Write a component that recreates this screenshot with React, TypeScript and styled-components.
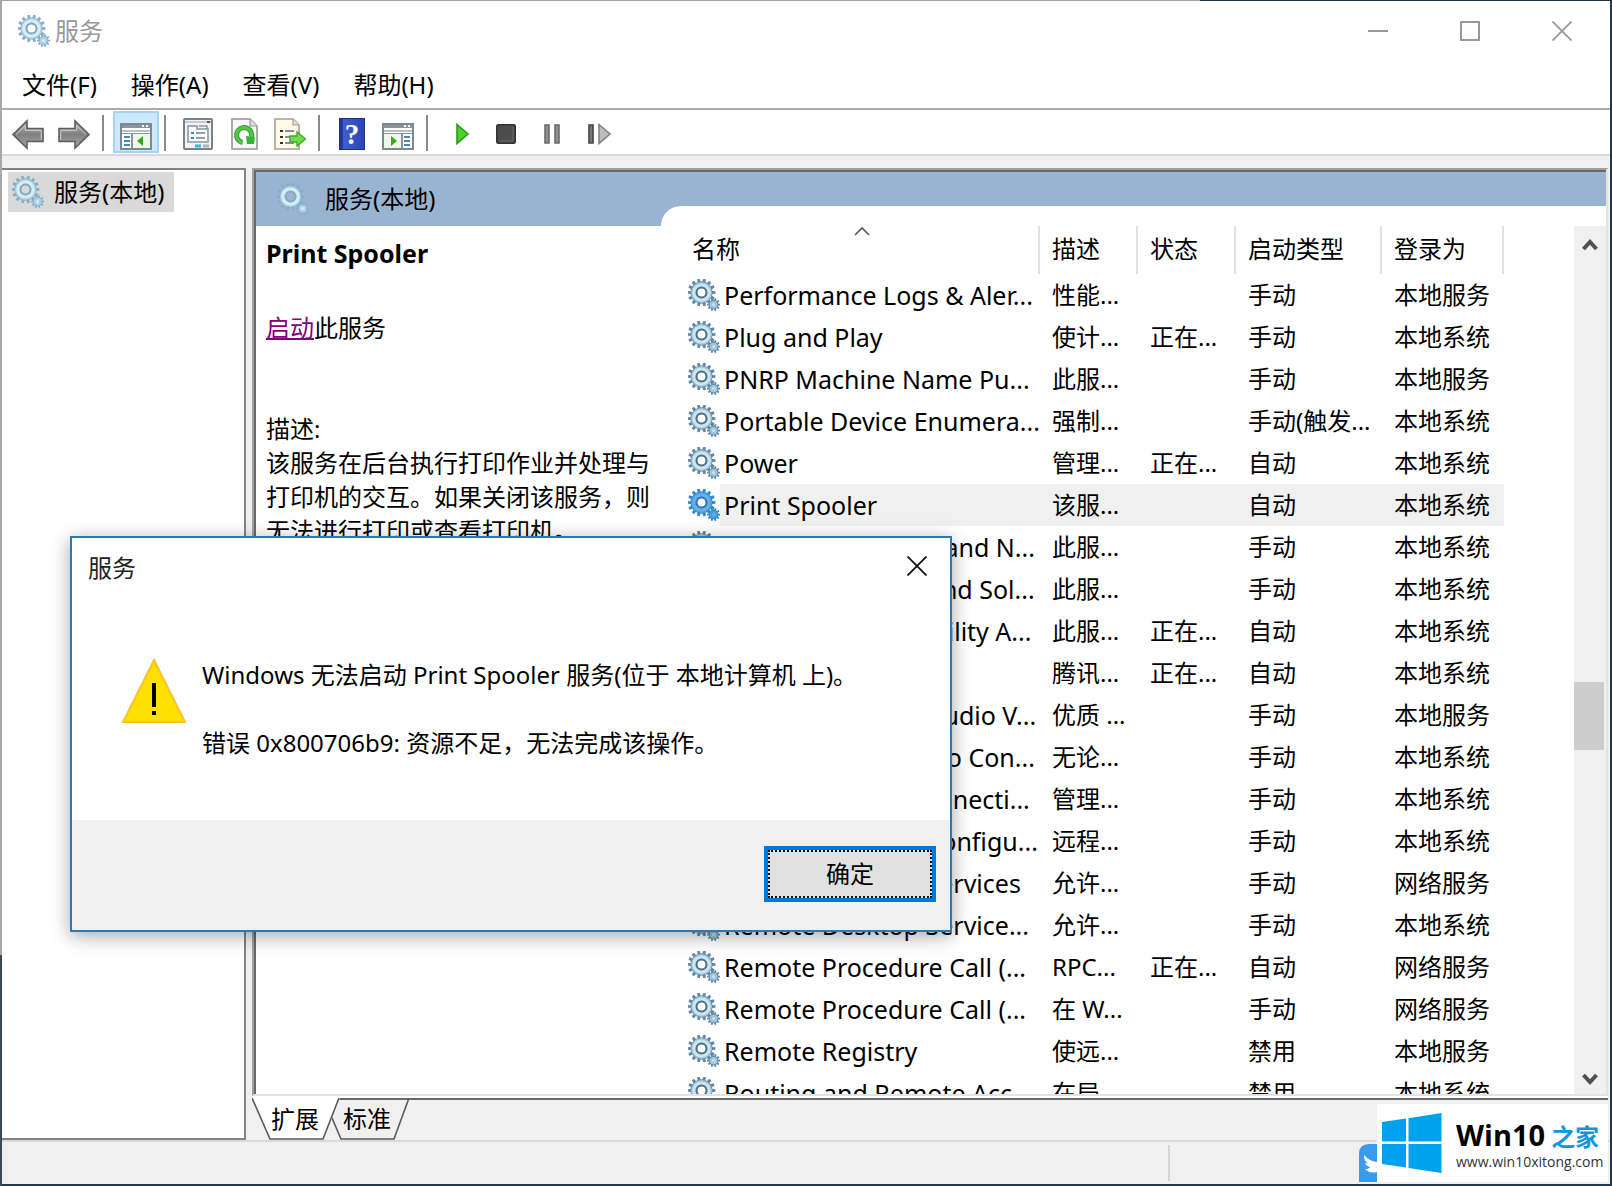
import React from "react";
import styled, { createGlobalStyle } from "styled-components";

const GlobalStyle = createGlobalStyle`
  *, *::before, *::after { box-sizing: border-box; }
  html, body, #root { height: 100%; }
  body {
    margin: 0;
    overflow: hidden;
    background: #1d3654;
    color: #000;
    font-family: "Noto Sans", "Noto Sans CJK SC", sans-serif;
    font-size: 24px;
    line-height: 34px;
  }
  button { font: inherit; color: inherit; border: 0; padding: 0; background: none; }
  h1, h2, p { margin: 0; font: inherit; }
`;

/* ---------- window ---------- */

const Desktop = styled.div`
  position: relative;
  height: 100vh;
  padding: 1px 2px 2px;
  background:
    linear-gradient(90deg, #a5a5a5 0 1200px, #22303d 1200px) top / 100% 1px no-repeat,
    linear-gradient(#a8a8a8 0 955px, #3a4a5c 955px) left / 2px 100% no-repeat,
    #1f3a58;
`;

const Window = styled.main`
  display: flex;
  flex-direction: column;
  height: 100%;
  background: #f0f0f0;
`;

const TitleBar = styled.header`
  display: flex;
  align-items: center;
  flex: none;
  height: 60px;
  padding-left: 16px;
  gap: 5px;
  background: #fff;
  color: #999;
`;

const WindowTitle = styled.h1`
  flex: 1;
`;

const CaptionButtons = styled.div`
  display: flex;
  padding-right: 2px;
`;

const CaptionButton = styled.button<{ $dialog?: boolean }>`
  display: flex;
  align-items: center;
  justify-content: center;
  width: ${(p) => (p.$dialog ? 66 : 92)}px;
  height: 56px;
  color: ${(p) => (p.$dialog ? "#111" : "#999")};
`;

const MenuBar = styled.nav`
  display: flex;
  flex: none;
  height: 47px;
  padding-left: 3px;
  background: #fff;
`;

const MenuItem = styled.button`
  padding: 0 17px;
`;

const Toolbar = styled.div`
  display: flex;
  align-items: center;
  flex: none;
  height: 48px;
  padding-left: 3px;
  background: #fff;
  border-top: 2px solid #ababab;
  border-bottom: 2px solid #dadada;
`;

const ToolButton = styled.button<{ $active?: boolean }>`
  display: flex;
  align-items: center;
  justify-content: center;
  width: 46px;
  height: 42px;
  padding-top: 4px;
  background: ${(p) => (p.$active ? "#cce8ff" : "transparent")};
  border: 2px solid ${(p) => (p.$active ? "#a3d3f5" : "transparent")};
`;

const ToolSeparator = styled.span`
  width: 2px;
  height: 36px;
  margin: 2px 9px 0 5px;
  background: #8a8a8a;
`;

/* ---------- panes ---------- */

const Panes = styled.div`
  display: flex;
  flex: 1;
  min-height: 0;
  gap: 6px;
  padding: 12px 2px 0 0;
`;

const TreePane = styled.aside`
  flex: none;
  width: 244px;
  padding: 2px 6px;
  background: #fff;
  border: solid #838383;
  border-width: 2px 2px 2px 0;
`;

const TreeItem = styled.button`
  display: flex;
  align-items: center;
  gap: 10px;
  height: 40px;
  padding: 0 10px 0 4px;
  background: #d9d9d9;
`;

const ResultPane = styled.section`
  display: flex;
  flex-direction: column;
  flex: 1;
  min-width: 0;
`;

const ResultFrame = styled.div`
  display: flex;
  flex: 1;
  min-height: 0;
  border: 2px solid #a0a0a0;
  border-right-color: #e3e3e3;
  border-bottom-color: #e3e3e3;
`;

const ResultBody = styled.div`
  display: flex;
  flex: 1;
  min-width: 0;
  border: solid #696969;
  border-width: 2px 0 0 2px;
  background: #99b4d1;
`;

const DetailColumn = styled.div`
  flex: none;
  width: 405px;
  display: flex;
  flex-direction: column;
`;

const DetailHeader = styled.div`
  display: flex;
  align-items: center;
  flex: none;
  height: 54px;
  padding-left: 21px;
  gap: 16px;
`;

const DetailBody = styled.div`
  flex: 1;
  min-height: 0;
  overflow: hidden;
  padding: 10px;
  background: #fff;
`;

const ServiceName = styled.h2`
  font-size: 25px;
  font-weight: 700;
  line-height: 34px;
`;

const StartLine = styled.p`
  margin: 41px 0 67px;
`;

const StartLink = styled.a`
  color: #800080;
  text-decoration-thickness: 2px;
`;

const ListColumn = styled.div`
  flex: 1;
  min-width: 0;
  display: flex;
  padding-top: 34px;
`;

const ListSurface = styled.div`
  flex: 1;
  min-width: 0;
  display: flex;
  padding-top: 20px;
  padding-left: 27px;
  background: #fff;
  border-top-left-radius: 20px;
`;

const TableClip = styled.div`
  flex: 1;
  min-width: 0;
  overflow: hidden;
`;

const ServiceTable = styled.table`
  width: 816px;
  table-layout: fixed;
  border-spacing: 0;
`;

const Col = styled.col<{ $width: number }>`
  width: ${(p) => p.$width}px;
`;

const HeadCell = styled.th<{ $first?: boolean }>`
  position: relative;
  height: 48px;
  padding: 0 0 2px ${(p) => (p.$first ? 4 : 12)}px;
  text-align: left;
  font-weight: 400;
  white-space: nowrap;
  background: linear-gradient(#e2e2e2, #e2e2e2) top right / 2px 48px no-repeat;
`;

const SortMark = styled.svg`
  position: absolute;
  top: 0;
  left: 50%;
  margin-left: -10px;
`;

const Cell = styled.td<{ $selected?: boolean }>`
  height: 42px;
  padding: 0 0 0 12px;
  white-space: nowrap;
  overflow: hidden;
  background: ${(p) => (p.$selected ? "#f0f0f0" : "transparent")};
`;

const NameCell = styled.td`
  height: 42px;
  padding: 0;
`;

const NameBox = styled.div`
  display: flex;
  align-items: center;
`;

const NameText = styled.span<{ $selected?: boolean }>`
  flex: 1;
  height: 42px;
  padding-left: 4px;
  font-size: 25px;
  line-height: 42px;
  white-space: nowrap;
  background: ${(p) => (p.$selected ? "#f0f0f0" : "transparent")};
`;

const Scrollbar = styled.div`
  display: flex;
  flex-direction: column;
  flex: none;
  width: 32px;
  background: #f0f0f0;
`;

const ScrollSpace = styled.span<{ $grow: number }>`
  flex: ${(p) => p.$grow} 1 0;
`;

const ScrollThumb = styled.span`
  flex: none;
  height: 68px;
  margin-right: 2px;
  background: #cdcdcd;
`;

const ScrollButton = styled.button<{ $down?: boolean }>`
  display: flex;
  align-items: center;
  justify-content: center;
  flex: none;
  height: ${(p) => (p.$down ? 28 : 36)}px;
`;

/* ---------- tabs and status ---------- */

const TabRow = styled.div`
  display: flex;
  flex: none;
  height: 44px;
  border-top: 2px solid #fff;
  background: linear-gradient(#696969, #696969) top / 100% 2px no-repeat;
`;

const TabButton = styled.button<{ $front?: boolean }>`
  position: relative;
  z-index: ${(p) => (p.$front ? 1 : 0)};
  width: ${(p) => (p.$front ? 88 : 78)}px;
  height: 42px;
  margin-left: ${(p) => (p.$front ? 0 : -8)}px;
  padding-right: ${(p) => (p.$front ? 2 : 8)}px;
`;

const TabShape = styled.svg`
  position: absolute;
  inset: 0;
`;

const TabLabel = styled.span`
  position: relative;
`;

const StatusBar = styled.footer`
  display: flex;
  flex: none;
  height: 44px;
  padding: 3px 0;
  border-top: 2px solid #dadada;
`;

const StatusMain = styled.span`
  flex: 1166 1 0;
  border-right: 2px solid #d4d4d4;
`;

const StatusExtra = styled.span`
  flex: 440 1 0;
`;

/* ---------- message box ---------- */

const Dialog = styled.section`
  position: absolute;
  z-index: 5;
  left: 70px;
  top: 536px;
  display: flex;
  flex-direction: column;
  width: 882px;
  height: 396px;
  background: #fff;
  border: 2px solid #2b78b4;
  box-shadow: 0 4px 18px rgba(0, 0, 0, 0.35);
`;

const DialogTitle = styled.div`
  display: flex;
  align-items: flex-start;
  justify-content: space-between;
  height: 60px;
  padding-left: 16px;
  color: #222;
`;

const DialogCaption = styled.span`
  line-height: 60px;
`;

const DialogBody = styled.div`
  display: flex;
  flex: 1;
  gap: 16px;
  padding: 60px 50px 0;
`;

const Message = styled.div`
  display: flex;
  flex-direction: column;
  gap: 34px;
`;

const DialogFooter = styled.div`
  display: flex;
  justify-content: flex-end;
  align-items: flex-start;
  height: 110px;
  padding: 26px 14px;
  background: #f0f0f0;
`;

const OkButton = styled.button`
  width: 172px;
  height: 56px;
  background: #e1e1e1;
  border: 4px solid #0078d7;
  outline: 2px dotted #111;
  outline-offset: -6px;
`;

/* ---------- watermark ---------- */

const Watermark = styled.div`
  position: absolute;
  z-index: 6;
  right: 4px;
  bottom: 4px;
  display: flex;
  align-items: flex-end;
`;

const BirdBadge = styled.svg`
  display: block;
  flex: none;
`;

const WatermarkCard = styled.div`
  display: flex;
  align-items: center;
  gap: 14px;
  width: 231px;
  height: 78px;
  padding-left: 5px;
  background: #fff;
`;

const WatermarkText = styled.div`
  padding-top: 6px;
  font-family: "Open Sans", "Noto Sans CJK SC", sans-serif;
`;

const Brand = styled.div`
  display: flex;
  align-items: baseline;
  gap: 6px;
  line-height: 30px;
  font-size: 29px;
  font-weight: 700;
`;

const BrandAccent = styled.span`
  color: #1296db;
  font-size: 24px;
`;

const SiteUrl = styled.div`
  font-size: 14px;
  line-height: 20px;
  color: #333;
`;

/* ---------- drawings ---------- */

const Drawing = styled.svg`
  display: block;
  flex: none;
`;

function gearPath(cx: number, cy: number, teeth: number, outer: number, inner: number) {
  const step = (Math.PI * 2) / teeth;
  const points: string[] = [];
  for (let i = 0; i < teeth; i++) {
    const a = i * step;
    const corners: [number, number][] = [
      [inner, a - step * 0.32],
      [outer, a - step * 0.2],
      [outer, a + step * 0.2],
      [inner, a + step * 0.32],
    ];
    corners.forEach(([r, t]) => points.push(`${(cx + r * Math.cos(t)).toFixed(2)} ${(cy + r * Math.sin(t)).toFixed(2)}`));
  }
  return `M${points.join("L")}Z`;
}

const BIG_GEAR = gearPath(13.5, 13.5, 14, 14, 11);
const SMALL_GEAR = gearPath(25.6, 25.6, 10, 6.6, 4.8);

function GearIcon({ tone = "list" }: { tone?: "list" | "title" | "selected" }) {
  const colors = {
    list: { edge: "#64869e", body: "#9cc5de", light: "#cbe5f3", hole: "#55727f" },
    title: { edge: "#88aec4", body: "#aed3e8", light: "#d9edf7", hole: "#86a9bb" },
    selected: { edge: "#2f86cc", body: "#4c9fe0", light: "#69b0e8", hole: "#2d78b8" },
  }[tone];
  return (
    <Drawing width="32" height="32" viewBox="0 0 32 32" aria-hidden="true">
      <path
        d={`${BIG_GEAR}M18 13.5a4.5 4.5 0 1 0-9 0a4.5 4.5 0 1 0 9 0Z`}
        fillRule="evenodd"
        fill={colors.edge}
      />
      <path
        d="M24 13.5a10.5 10.5 0 1 0-21 0a10.5 10.5 0 1 0 21 0ZM18 13.5a4.5 4.5 0 1 0-9 0a4.5 4.5 0 1 0 9 0Z"
        fillRule="evenodd"
        fill={colors.body}
      />
      <circle cx="13.5" cy="13.5" r="7.6" fill="none" stroke={colors.light} strokeWidth="3" />
      <circle cx="13.5" cy="13.5" r="5" fill="none" stroke={colors.hole} strokeWidth="2" />
      <path d={SMALL_GEAR} fill={colors.edge} />
      <circle cx="25.6" cy="25.6" r="3.9" fill={colors.body} />
      <circle cx="25.6" cy="25.6" r="1.5" fill={colors.light} />
    </Drawing>
  );
}

function ArrowIcon({ flip }: { flip?: boolean }) {
  return (
    <Drawing width="32" height="32" viewBox="0 0 32 32" aria-hidden="true">
      <defs>
        <linearGradient id="arrowFill" x1="0" y1="0" x2="0" y2="1">
          <stop offset="0" stopColor="#b5b5b5" />
          <stop offset="0.5" stopColor="#808080" />
          <stop offset="1" stopColor="#a8a8a8" />
        </linearGradient>
      </defs>
      <g transform={flip ? "translate(32 0) scale(-1 1)" : undefined}>
        <path d="M1 16.5L15 3v7.5h16v13H15V30Z" fill="url(#arrowFill)" stroke="#5e5e5e" strokeWidth="1.6" />
        <path d="M4 16.5L13.3 7.5v4.8h16v9.4" fill="none" stroke="#d0d0d0" strokeWidth="1" />
      </g>
    </Drawing>
  );
}

function ConsoleIcon({ flip }: { flip?: boolean }) {
  return (
    <Drawing width="32" height="32" viewBox="0 0 32 32" aria-hidden="true">
      <rect x="1" y="6" width="30" height="25" fill="#fff" stroke="#7d8890" strokeWidth="2" />
      <rect x="2" y="7" width="28" height="3" fill="#8a959d" />
      <path d="M22 8h2M26 8h2" stroke="#fff" strokeWidth="2" />
      <path d="M2 13h28" stroke="#b9c2c8" strokeWidth="2" />
      <path d="M2 15.5h28" stroke="#8a959d" strokeWidth="1" />
      <g transform={flip ? "translate(32 0) scale(-1 1)" : undefined}>
        <path d="M12 16v14" stroke="#8a959d" strokeWidth="2" />
        <path d="M4 19h6M4 23h6M4 27h6" stroke="#4e86b4" strokeWidth="2" />
        <rect x="13" y="16" width="17" height="14" fill="#eef8ea" />
        <path d="M17 23l6-5v10Z" fill="#3aa81f" />
      </g>
    </Drawing>
  );
}

function PropertiesIcon() {
  return (
    <Drawing width="32" height="32" viewBox="0 0 32 32" aria-hidden="true">
      <rect x="2" y="1" width="28" height="30" rx="1" fill="#f1f3f5" stroke="#79828a" strokeWidth="2" />
      <path d="M3 4h26" stroke="#c5cbd0" strokeWidth="2" />
      <path d="M25 4h3" stroke="#555" strokeWidth="2" />
      <path d="M6 8h9v3h11v13H6Z" fill="#fff" stroke="#8a959d" strokeWidth="1.5" />
      <path d="M17 8h8v3" fill="none" stroke="#8a959d" strokeWidth="1.5" />
      <path d="M9 15h3M9 20h3" stroke="#2d86c7" strokeWidth="2" />
      <path d="M14 15h9M14 20h9" stroke="#8fa0ad" strokeWidth="2" />
      <path d="M13 28h6" stroke="#35b6ea" strokeWidth="3" />
      <path d="M21 28h6" stroke="#aab2b8" strokeWidth="3" />
    </Drawing>
  );
}

function RefreshIcon() {
  return (
    <Drawing width="32" height="32" viewBox="0 0 32 32" aria-hidden="true">
      <path d="M4 1h18l7 7v23H4Z" fill="#f7f7f7" stroke="#979797" strokeWidth="1.6" />
      <path d="M22 1v7h7" fill="#dcdcdc" stroke="#979797" strokeWidth="1.2" />
      <path d="M14.5 24.5A7.6 7.6 0 1 1 23.5 19" fill="none" stroke="#2f9e2a" strokeWidth="5" />
      <path d="M14.5 24.5A7.6 7.6 0 1 1 23.5 19" fill="none" stroke="#52c648" strokeWidth="3" />
      <path d="M18 18l9 1-1 7h-7Z" fill="#3bb032" />
    </Drawing>
  );
}

function ExportIcon() {
  return (
    <Drawing width="32" height="32" viewBox="0 0 32 32" aria-hidden="true">
      <path d="M1 1h18l6 6v24H1Z" fill="#fffbe6" stroke="#a8a08a" strokeWidth="1.6" />
      <path d="M19 1v6h6" fill="#e6e0cc" stroke="#a8a08a" strokeWidth="1.2" />
      <path d="M6 13h3M6 19h3M6 25h3" stroke="#333" strokeWidth="2" />
      <path d="M11 13h9M11 19h6M11 25h9" stroke="#8d88a0" strokeWidth="2" />
      <path d="M16 18h7v-4l8.5 7-8.5 7v-4h-7Z" fill="#6fdc4c" stroke="#42a82d" strokeWidth="1.4" />
    </Drawing>
  );
}

const HelpGlyph = styled.span`
  display: flex;
  align-items: center;
  justify-content: center;
  width: 26px;
  height: 32px;
  background: linear-gradient(90deg, #24399a 0 3px, #3d5fd0 3px, #2b46b4);
  border: 1px solid #1e2f88;
  color: #fff;
  font-family: "Liberation Serif", serif;
  font-size: 29px;
  font-weight: 700;
  line-height: 30px;
`;

function PlayIcon() {
  return (
    <Drawing width="32" height="32" viewBox="0 0 32 32" aria-hidden="true">
      <path d="M13 6.5L24 16 13 25.5Z" fill="#4fd02c" stroke="#2c9a17" strokeWidth="1.6" />
    </Drawing>
  );
}

function StopIcon() {
  return (
    <Drawing width="32" height="32" viewBox="0 0 32 32" aria-hidden="true">
      <rect x="6.8" y="6.8" width="18.4" height="18.4" rx="1.5" fill="#4c4c4c" stroke="#333" strokeWidth="1.6" />
      <path d="M9 23h14V9" fill="none" stroke="#6a6a6a" strokeWidth="1" />
    </Drawing>
  );
}

function PauseIcon() {
  return (
    <Drawing width="32" height="32" viewBox="0 0 32 32" aria-hidden="true">
      <path d="M9 7h4v18H9ZM19 7h4v18h-4Z" fill="#8f8f8f" stroke="#6b6b6b" strokeWidth="1.6" />
    </Drawing>
  );
}

function ResumeIcon() {
  return (
    <Drawing width="32" height="32" viewBox="0 0 32 32" aria-hidden="true">
      <path d="M7 7h4v18H7Z" fill="#777" stroke="#444" strokeWidth="1.6" />
      <path d="M17 6.5L28 16 17 25.5Z" fill="#bdbdbd" stroke="#828282" strokeWidth="1.6" />
    </Drawing>
  );
}

function MinimizeIcon() {
  return (
    <Drawing width="20" height="20" aria-hidden="true">
      <path d="M0 10h20" stroke="currentColor" strokeWidth="2" />
    </Drawing>
  );
}

function MaximizeIcon() {
  return (
    <Drawing width="20" height="20" aria-hidden="true">
      <rect x="1" y="1" width="18" height="18" fill="none" stroke="currentColor" strokeWidth="2" />
    </Drawing>
  );
}

function CloseIcon() {
  return (
    <Drawing width="20" height="20" viewBox="0 0 20 20" aria-hidden="true">
      <path d="M.5.5l19 19M19.5.5l-19 19" stroke="currentColor" strokeWidth="1.8" />
    </Drawing>
  );
}

function ChevronIcon({ down }: { down?: boolean }) {
  return (
    <Drawing width="16" height="14" viewBox="0 0 16 14" aria-hidden="true">
      <path d={down ? "M1.5 2l6.5 7 6.5-7" : "M1.5 12l6.5-7 6.5 7"} fill="none" stroke="#505050" strokeWidth="4" />
    </Drawing>
  );
}

function WarningIcon() {
  return (
    <Drawing width="64" height="66" viewBox="0 0 64 66" aria-hidden="true">
      <path d="M32 2L63 64H1Z" fill="#ffe000" stroke="#f7c22c" strokeWidth="2" />
      <path d="M32 25v24" stroke="#000" strokeWidth="4" />
      <path d="M32 53v4" stroke="#000" strokeWidth="4" />
    </Drawing>
  );
}

function WindowsLogo() {
  return (
    <Drawing width="60" height="60" viewBox="0 0 60 60" aria-hidden="true">
      <path d="M0 9L24 5.6v23H0ZM26.5 5.2L59.5 0v28.5h-33ZM0 31h24V54.5L0 51ZM26.5 31h33V60l-33-5Z" fill="#00a2ed" />
    </Drawing>
  );
}

/* ---------- data ---------- */

interface Service {
  name: string;
  about: string;
  state: string;
  startup: string;
  account: string;
}

const SELECTED = "Print Spooler";

const services: Service[] = [
  ["Performance Logs & Aler...", "性能...", "", "手动", "本地服务"],
  ["Plug and Play", "使计...", "正在...", "手动", "本地系统"],
  ["PNRP Machine Name Pu...", "此服...", "", "手动", "本地服务"],
  ["Portable Device Enumera...", "强制...", "", "手动(触发...", "本地系统"],
  ["Power", "管理...", "正在...", "自动", "本地系统"],
  ["Print Spooler", "该服...", "", "自动", "本地系统"],
  ["Printer Extensions and N...", "此服...", "", "手动", "本地系统"],
  ["Problem Reports and Sol...", "此服...", "", "手动", "本地系统"],
  ["Program Compatibility A...", "此服...", "正在...", "自动", "本地系统"],
  ["QPCore Service", "腾讯...", "正在...", "自动", "本地系统"],
  ["Quality Windows Audio V...", "优质 ...", "", "手动", "本地服务"],
  ["Remote Access Auto Con...", "无论...", "", "手动", "本地系统"],
  ["Remote Access Connecti...", "管理...", "", "手动", "本地系统"],
  ["Remote Desktop Configu...", "远程...", "", "手动", "本地系统"],
  ["Remote Desktop Services", "允许...", "", "手动", "网络服务"],
  ["Remote Desktop Service...", "允许...", "", "手动", "本地系统"],
  ["Remote Procedure Call (...", "RPC...", "正在...", "自动", "网络服务"],
  ["Remote Procedure Call (...", "在 W...", "", "手动", "网络服务"],
  ["Remote Registry", "使远...", "", "禁用", "本地服务"],
  ["Routing and Remote Acc...", "在局...", "", "禁用", "本地系统"],
].map(([name, about, state, startup, account]) => ({ name, about, state, startup, account }));

const menus = ["文件(F)", "操作(A)", "查看(V)", "帮助(H)"];
const headings = ["名称", "描述", "状态", "启动类型", "登录为"];
const columnWidths = [352, 98, 98, 146, 122];

function ServiceRow({ service }: { service: Service }) {
  const selected = service.name === SELECTED;
  return (
    <tr>
      <NameCell>
        <NameBox>
          <GearIcon tone={selected ? "selected" : "list"} />
          <NameText $selected={selected}>{service.name}</NameText>
        </NameBox>
      </NameCell>
      <Cell $selected={selected}>{service.about}</Cell>
      <Cell $selected={selected}>{service.state}</Cell>
      <Cell $selected={selected}>{service.startup}</Cell>
      <Cell $selected={selected}>{service.account}</Cell>
    </tr>
  );
}

export default function App() {
  return (
    <>
      <GlobalStyle />
      <Desktop>
        <Window>
          <TitleBar>
            <GearIcon tone="title" />
            <WindowTitle>服务</WindowTitle>
            <CaptionButtons>
              <CaptionButton aria-label="最小化"><MinimizeIcon /></CaptionButton>
              <CaptionButton aria-label="最大化"><MaximizeIcon /></CaptionButton>
              <CaptionButton aria-label="关闭"><CloseIcon /></CaptionButton>
            </CaptionButtons>
          </TitleBar>

          <MenuBar>
            {menus.map((label) => (
              <MenuItem key={label}>{label}</MenuItem>
            ))}
          </MenuBar>

          <Toolbar>
            <ToolButton aria-label="后退"><ArrowIcon /></ToolButton>
            <ToolButton aria-label="前进"><ArrowIcon flip /></ToolButton>
            <ToolSeparator />
            <ToolButton $active aria-label="显示控制台树"><ConsoleIcon /></ToolButton>
            <ToolSeparator />
            <ToolButton aria-label="属性"><PropertiesIcon /></ToolButton>
            <ToolButton aria-label="刷新"><RefreshIcon /></ToolButton>
            <ToolButton aria-label="导出列表"><ExportIcon /></ToolButton>
            <ToolSeparator />
            <ToolButton aria-label="帮助"><HelpGlyph>?</HelpGlyph></ToolButton>
            <ToolButton aria-label="显示操作窗格"><ConsoleIcon flip /></ToolButton>
            <ToolSeparator />
            <ToolButton aria-label="启动服务"><PlayIcon /></ToolButton>
            <ToolButton aria-label="停止服务"><StopIcon /></ToolButton>
            <ToolButton aria-label="暂停服务"><PauseIcon /></ToolButton>
            <ToolButton aria-label="重新启动服务"><ResumeIcon /></ToolButton>
          </Toolbar>

          <Panes>
            <TreePane>
              <TreeItem>
                <GearIcon tone="title" />
                服务(本地)
              </TreeItem>
            </TreePane>

            <ResultPane>
              <ResultFrame>
                <ResultBody>
                  <DetailColumn>
                    <DetailHeader>
                      <GearIcon tone="title" />
                      服务(本地)
                    </DetailHeader>
                    <DetailBody>
                      <ServiceName>Print Spooler</ServiceName>
                      <StartLine>
                        <StartLink href="#start">启动</StartLink>此服务
                      </StartLine>
                      <p>描述:</p>
                      <p>该服务在后台执行打印作业并处理与打印机的交互。如果关闭该服务，则无法进行打印或查看打印机。</p>
                    </DetailBody>
                  </DetailColumn>

                  <ListColumn>
                    <ListSurface>
                      <TableClip>
                        <ServiceTable>
                          <colgroup>
                            {columnWidths.map((width, i) => (
                              <Col key={i} $width={width} />
                            ))}
                          </colgroup>
                          <thead>
                            <tr>
                              {headings.map((label, i) => (
                                <HeadCell key={label} $first={i === 0}>
                                  {label}
                                  {i === 0 && (
                                    <SortMark width="16" height="10" aria-hidden="true">
                                      <path d="M1 9l7-7 7 7" fill="none" stroke="#555" strokeWidth="1.6" />
                                    </SortMark>
                                  )}
                                </HeadCell>
                              ))}
                            </tr>
                          </thead>
                          <tbody>
                            {services.map((service, i) => (
                              <ServiceRow key={i} service={service} />
                            ))}
                          </tbody>
                        </ServiceTable>
                      </TableClip>
                      <Scrollbar>
                        <ScrollButton aria-label="向上滚动"><ChevronIcon /></ScrollButton>
                        <ScrollSpace $grow={420} />
                        <ScrollThumb />
                        <ScrollSpace $grow={316} />
                        <ScrollButton $down aria-label="向下滚动"><ChevronIcon down /></ScrollButton>
                      </Scrollbar>
                    </ListSurface>
                  </ListColumn>
                </ResultBody>
              </ResultFrame>

              <TabRow>
                <TabButton $front>
                  <TabShape width="88" height="42" aria-hidden="true">
                    <path d="M0 0L18 41H71L88 0Z" fill="#fff" />
                    <path d="M0 0L18 41H71L87 0" fill="none" stroke="#5a5a5a" strokeWidth="1.6" />
                  </TabShape>
                  <TabLabel>扩展</TabLabel>
                </TabButton>
                <TabButton>
                  <TabShape width="78" height="42" aria-hidden="true">
                    <path d="M0 20L9 41H62L77 0" fill="none" stroke="#5a5a5a" strokeWidth="1.6" />
                  </TabShape>
                  <TabLabel>标准</TabLabel>
                </TabButton>
              </TabRow>
            </ResultPane>
          </Panes>

          <StatusBar>
            <StatusMain />
            <StatusExtra />
          </StatusBar>
        </Window>

        <Dialog role="dialog" aria-label="服务">
          <DialogTitle>
            <DialogCaption>服务</DialogCaption>
            <CaptionButton $dialog aria-label="关闭对话框"><CloseIcon /></CaptionButton>
          </DialogTitle>
          <DialogBody>
            <WarningIcon />
            <Message>
              <p>Windows 无法启动 Print Spooler 服务(位于 本地计算机 上)。</p>
              <p>错误 0x800706b9: 资源不足，无法完成该操作。</p>
            </Message>
          </DialogBody>
          <DialogFooter>
            <OkButton>确定</OkButton>
          </DialogFooter>
        </Dialog>

        <Watermark>
          <BirdBadge width="18" height="38" viewBox="0 0 18 38" aria-hidden="true">
            <path d="M18 0H10Q0 0 0 10V38H18Z" fill="#3a9bed" />
            <path d="M5 11q5 6 13 7v10q-7 2-12-3 4 0 5-2-4-1-5-4 2 .5 2.5 0-4-3-3.5-8Z" fill="#fff" />
          </BirdBadge>
          <WatermarkCard>
            <WindowsLogo />
            <WatermarkText>
              <Brand>
                <span>Win10</span>
                <BrandAccent>之家</BrandAccent>
              </Brand>
              <SiteUrl>www.win10xitong.com</SiteUrl>
            </WatermarkText>
          </WatermarkCard>
        </Watermark>
      </Desktop>
    </>
  );
}
